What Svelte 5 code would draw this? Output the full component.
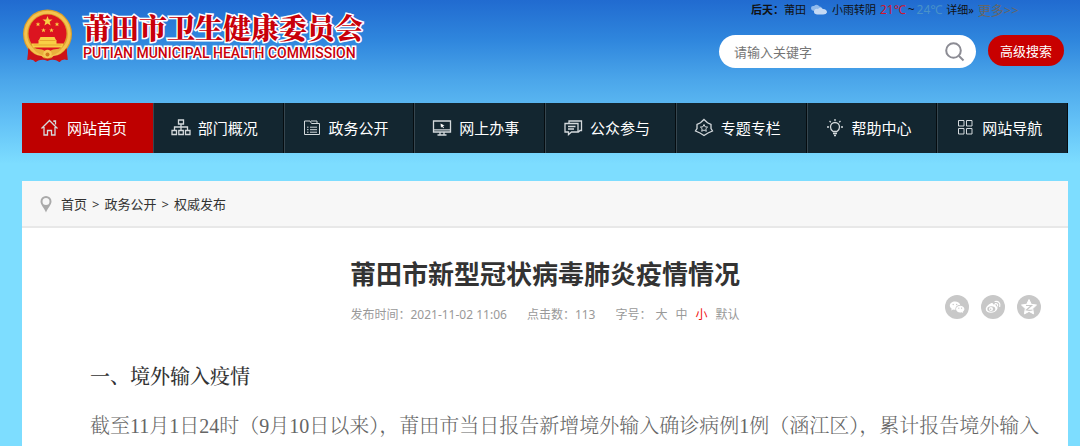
<script lang="ts">
  const nav = [
    { id: 'home', label: '网站首页' },
    { id: 'org', label: '部门概况' },
    { id: 'folder', label: '政务公开' },
    { id: 'screen', label: '网上办事' },
    { id: 'chat', label: '公众参与' },
    { id: 'badge', label: '专题专栏' },
    { id: 'bulb', label: '帮助中心' },
    { id: 'grid', label: '网站导航' }
  ];
  const sizes = ['大', '中', '小', '默认'];
  let active = $state('小');
  let keyword = $state('');
</script>

<div class="page">
  <header>
    <a class="brand" href="#home">
      <svg class="emblem" viewBox="0 0 50 54" aria-hidden="true">
        <path d="M6 36 L5 51 Q10 49 13 53 Q19 49 25 52 Q31 49 37 53 Q40 49 45 51 L44 36Z" fill="#c9141a" />
        <circle cx="25" cy="25" r="24.5" fill="#dda02a" />
        <circle cx="25" cy="25" r="21.8" fill="none" stroke="#f4c350" stroke-width="3" />
        <circle cx="25" cy="24.5" r="19" fill="#dc1420" />
        <path d="M25 7l1.3 3.4 3.7.1-2.9 2.3 1 3.6-3.1-2-3.1 2 1-3.6-2.9-2.3 3.7-.1z" fill="#f9cf45" />
        <g fill="#f9cf45">
          <path d="M15.500 13l.6 1.500 1.700.1-1.300 1 .5 1.600-1.500-.9-1.500.9.500-1.600-1.300-1 1.700-.1z" />
          <path d="M34.500 13l.6 1.500 1.700.1-1.300 1 .5 1.600-1.500-.9-1.500.9.500-1.600-1.300-1 1.700-.1z" />
          <path d="M21 19l.6 1.500 1.700.1-1.300 1 .5 1.600-1.500-.9-1.500.9.500-1.600-1.300-1 1.700-.1z" />
          <path d="M29 19l.6 1.500 1.700.1-1.300 1 .5 1.600-1.500-.9-1.500.9.500-1.600-1.300-1 1.700-.1z" />
          <path d="M18 28h14l1.500 3H34v3.500h7l-1.500 4h-29l-1.500-4h7V31h.5z" />
        </g>
        <path d="M17 31.500h16M11 36h28" stroke="#e29a28" stroke-width=".8" />
        <path d="M11 40 Q18 39 25 43 Q32 39 39 40 Q35 46 25 47 Q15 46 11 40Z" fill="#e8b03c" />
        <circle cx="25" cy="45" r="4.200" fill="#f6cb55" />
        <circle cx="25" cy="45.500" r="2" fill="#d2781d" />
        <path d="M6 39 Q10 46 19 47 L22 50 Q17 49 13 53 Q10 49 5 51Z M44 39 Q40 46 31 47 L28 50 Q33 49 37 53 Q40 49 45 51Z" fill="#cc1219" />
      </svg>
      <span class="names">
        <span class="zh">莆田市卫生健康委员会</span>
        <span class="en">PUTIAN MUNICIPAL HEALTH COMMISSION</span>
      </span>
    </a>

    <div class="tools">
      <div class="weather">
        <b>后天：</b><span>莆田</span>
        <svg class="cloud" viewBox="0 0 18 12" aria-hidden="true">
          <path d="M1 4Q1 1.500 4 2Q7-.5 9.500 2.500Q12 2.500 12 5Q10 8 5 7Q1 7 1 4Z" fill="#8fb9ec" />
          <path d="M4 7Q5 4 8 5Q10 2.500 13 5Q17 5 17 8.500Q16 11 12 10.500H7Q3.500 10 4 7Z" fill="#c4d9f4" />
        </svg>
        <span>小雨转阴</span>
        <span class="temps"><span class="low">21℃</span>~<span class="high">24℃</span></span>
        <a href="#detail">详细»</a>
        <a class="more" href="#more">更多&gt;&gt;</a>
      </div>
      <form class="search" onsubmit={(e) => e.preventDefault()}>
        <div class="field">
          <input type="text" aria-label="请输入关键字" placeholder="请输入关键字" bind:value={keyword} />
          <button class="go" type="submit" aria-label="搜索">
            <svg viewBox="0 0 20 20" aria-hidden="true"><circle cx="8.500" cy="8.500" r="7.300" /><path d="M14 14l4.500 4.500" /></svg>
          </button>
        </div>
        <button class="advanced" type="button">高级搜索</button>
      </form>
    </div>
  </header>

  <nav>
    {#each nav as item, i}
      <a href={'#' + item.id} class:current={i === 0}>
        <svg viewBox="0 0 20 20" aria-hidden="true">
          {#if item.id === 'home'}
            <path d="M1.500 10.500L9.500 2.500l8 8M14 4v-1h1.500v3.500M4 9v8h3.500v-4.500h4V17H15V9" />
          {:else if item.id === 'org'}
            <path d="M7.500 2h5v4h-5zM10 6v6M3.500 12V9h13v3M1 12.500h4.500v4H1zM7.800 12.500h4.500v4H7.800zM14.500 12.500H19v4h-4.500z" />
          {:else if item.id === 'folder'}
            <path class="thin" d="M2.500 16.500V3h5.500l1.500 2.500h8v11zM9 3h6v2.500M5 9.200h1.500M8 9.200h7M5 11.700h1.500M8 11.700h7M5 14.200h1.500M8 14.200h7" />
          {:else if item.id === 'screen'}
            <path d="M1.500 3h17v11h-17zM1.500 11.800h17M8 14v2.500M12 14v2.500M5.500 17h9" />
            <path class="solid" d="M8.500 5.500l4 2-1.700.6 1.200 1.600-.8.6-1.200-1.700-1 1.200z" />
          {:else if item.id === 'chat'}
            <path d="M6 5V3h12.500v9.500H17L15.500 14M2 5.500h13v8.500H8.500L5.500 16.500V14H2zM5 8.500h7.500M5 11h6" />
          {:else if item.id === 'badge'}
            <path d="M10 1.500l3.500 3.300 3.500 1.700v4l1.500 2.500-4.500 2-4 2.500L6 15l-4.500-2L3 10.500v-4l3.500-1.700z" />
            <path class="thin" d="M10 6.500l1.100 2.300 2.500.3-1.800 1.700.5 2.500L10 12l-2.300 1.300.5-2.500-1.800-1.700 2.500-.3z" />
          {:else if item.id === 'bulb'}
            <path d="M8 13.500Q5.500 12 5.500 9a4.500 4.500 0 0 1 9 0Q14.500 12 12 13.500zM8 15.500h4M9 17.500h2M10 1v2M4.500 3l1.300 1.300M15.500 3l-1.300 1.300M2 9h2M16 9h2" />
          {:else}
            <path class="thin" d="M3.500 2.500h5.500v5.500H3.500zM11.500 2.500H17v5.500h-5.500zM3.500 10.500h5.500V16H3.500zM11.500 10.500H17V16h-5.500z" />
          {/if}
        </svg>
        <span>{item.label}</span>
      </a>
    {/each}
  </nav>

  <main>
    <div class="crumbs">
      <svg viewBox="0 0 12 18" aria-hidden="true">
        <path fill-rule="evenodd" d="M6 1a5.500 5.500 0 0 1 5.500 5.500C11.500 10 7.500 13 6 17.500 4.500 13 .5 10 .5 6.500A5.500 5.500 0 0 1 6 1zm0 2a3.500 3.500 0 1 0 0 7 3.500 3.500 0 0 0 0-7z" fill="#aaa" />
      </svg>
      <a href="#home">首页</a><span>&gt;</span><a href="#open">政务公开</a><span>&gt;</span><a href="#release">权威发布</a>
    </div>

    <article>
      <h1>莆田市新型冠状病毒肺炎疫情情况</h1>
      <div class="info">
        <div class="meta">
          <span>发布时间：2021-11-02 11:06</span>
          <span>点击数：113</span>
          <span class="sizes">
            <span>字号：</span>
            {#each sizes as s}
              <button type="button" class:on={active === s} onclick={() => (active = s)}>{s}</button>
            {/each}
          </span>
        </div>
        <div class="share">
          <a href="#wechat" aria-label="微信">
            <svg viewBox="0 0 24 24" aria-hidden="true">
              <circle cx="12" cy="12" r="12" fill="#c8c8c8" />
              <path d="M10 6.500c-3 0-5.200 1.800-5.200 4.100 0 1.300.7 2.400 1.900 3.200l-.5 1.600 1.900-1c.6.200 1.200.3 1.900.3h.5c-.5-2.900 1.900-4.900 4.700-4.800C14.800 7.800 12.700 6.500 10 6.500z" fill="#fff" />
              <path d="M15.200 10.700c-2.400 0-4.200 1.500-4.200 3.400s1.800 3.400 4.200 3.400c.5 0 1-.1 1.500-.2l1.500.8-.4-1.300c1-.7 1.600-1.600 1.600-2.700 0-1.900-1.900-3.400-4.200-3.400z" fill="#fff" />
              <g fill="#c8c8c8"><circle cx="8.200" cy="9.500" r=".7" /><circle cx="11.700" cy="9.500" r=".7" /><circle cx="13.800" cy="13.200" r=".6" /><circle cx="16.600" cy="13.200" r=".6" /></g>
            </svg>
          </a>
          <a href="#weibo" aria-label="微博">
            <svg viewBox="0 0 24 24" aria-hidden="true">
              <circle cx="12" cy="12" r="12" fill="#c8c8c8" />
              <path d="M10 8.200c1.200-.5 2.300-.2 2 1.400 1.800-.7 3.300-.3 2.800 1.300 1.600.4 2.100 1.600 1.500 3-.9 2.300-3.500 3.900-6.500 3.900-2.900 0-5-1.500-5-3.600 0-2.500 2.800-5.100 5.200-6z" fill="#fff" />
              <ellipse cx="10.300" cy="14" rx="4" ry="2.800" fill="#c8c8c8" />
              <circle cx="10" cy="14" r="2" fill="#fff" /><circle cx="9.600" cy="14.300" r=".8" fill="#c8c8c8" />
              <path d="M14 6.500c3.500-.7 5.800 1.800 4.700 5M14.300 8.700c1.700-.3 2.700.8 2.200 2.300" fill="none" stroke="#fff" stroke-width="1.200" stroke-linecap="round" />
            </svg>
          </a>
          <a href="#qzone" aria-label="QQ空间">
            <svg viewBox="0 0 24 24" aria-hidden="true">
              <circle cx="12" cy="12" r="12" fill="#c8c8c8" />
              <path d="M12 4.500l2.300 4.800 5.200.7-3.800 3.600.9 5.300-4.600-2.500-4.600 2.500.9-5.300L4.500 10l5.200-.7z" fill="#fff" stroke="#fff" stroke-linejoin="round" />
              <path d="M9 10.500h5.500l-5 4.500q3 .6 6 0" fill="none" stroke="#c8c8c8" stroke-width="1.200" />
            </svg>
          </a>
        </div>
      </div>
      <div class="text">
        <h2>一、境外输入疫情</h2>
        <p>截至11月1日24时（9月10日以来），莆田市当日报告新增境外输入确诊病例1例（涵江区），累计报告境外输入</p>
      </div>
    </article>
  </main>
</div>

<style>
  :global(body) {
    margin: 0;
    background: #7dddff;
  }
  .page {
    box-sizing: border-box;
    display: flex;
    flex-direction: column;
    min-height: 100vh;
    padding: 0 12px 0 22px;
    background: linear-gradient(#216bd0 0, #2f86dd 40px, #4ba6ea 80px, #62c0f6 120px, #7dddff 164px);
    font: 13px/20px "Noto Sans", "Noto Sans CJK SC", sans-serif;
    color: #333;
  }
  a {
    color: inherit;
    text-decoration: none;
  }
  button {
    border: 0;
    padding: 0;
    background: none;
    font: inherit;
    color: inherit;
    cursor: pointer;
  }
  svg {
    display: block;
    flex: none;
  }
  header {
    display: flex;
    justify-content: space-between;
    height: 103px;
  }
  .brand {
    display: flex;
    align-items: flex-start;
    gap: 10px;
    padding-top: 9px;
  }
  .emblem {
    width: 51px;
    height: 54px;
  }
  .names {
    display: flex;
    flex-direction: column;
    color: #c8000a;
    white-space: nowrap;
    -webkit-text-stroke: 3px #fff;
    paint-order: stroke fill;
  }
  .zh {
    font: 900 28px/36px "Noto Serif CJK SC", "Noto Sans CJK SC", serif;
  }
  .en {
    font: 500 14px/16px Roboto, "Liberation Sans", sans-serif;
  }
  .tools {
    padding-right: 4px;
    color: #111;
  }
  .weather {
    display: flex;
    align-items: center;
    height: 20px;
    gap: 4px;
    padding-left: 32px;
    margin-bottom: 15px;
    font-size: 11px;
    white-space: nowrap;
  }
  .weather b {
    margin-right: -4px;
  }
  .cloud {
    width: 18px;
    height: 12px;
  }
  .temps {
    display: flex;
    gap: 2px;
    font-size: 12px;
  }
  .low {
    color: #d0142c;
  }
  .high {
    color: #4a92c8;
  }
  .more {
    color: #666;
    font-size: 13px;
  }
  .search {
    display: flex;
    gap: 12px;
  }
  .field {
    box-sizing: border-box;
    display: flex;
    align-items: center;
    width: 257px;
    height: 33px;
    padding: 0 11px 0 15px;
    border-radius: 17px;
    background: #fff;
  }
  .field input {
    flex: 1;
    min-width: 0;
    border: 0;
    padding: 0;
    outline: 0;
    background: none;
    font: inherit;
  }
  .field input::placeholder {
    color: #757575;
  }
  .go svg {
    width: 20px;
    height: 20px;
    fill: none;
    stroke: #8c8c94;
    stroke-width: 2;
  }
  .advanced {
    width: 76px;
    height: 31px;
    border-radius: 16px;
    background: #c80000;
    color: #fff;
  }
  nav {
    display: grid;
    grid-template-columns: repeat(8, 1fr);
    margin-bottom: 28px;
    background: #132630;
  }
  nav a {
    box-sizing: border-box;
    display: flex;
    align-items: center;
    gap: 7px;
    height: 50px;
    padding-left: 17px;
    border-left: 1px solid #36464f;
    border-right: 1px solid #050c10;
    color: #fff;
    font-size: 15px;
    white-space: nowrap;
  }
  nav a.current {
    border-color: #be0000;
    background: #be0000;
  }
  nav svg {
    width: 20px;
    height: 20px;
    fill: none;
    stroke: #d4d9dc;
    stroke-width: 1.300;
  }
  nav .thin {
    stroke-width: 1;
  }
  nav .solid {
    fill: #fff;
    stroke: none;
  }
  main {
    flex: 1;
    background: #fff;
  }
  .crumbs {
    display: flex;
    align-items: center;
    gap: 5px;
    height: 45px;
    padding-left: 18px;
    border-bottom: 2px solid #e8e8e8;
    background: #f7f7f7;
  }
  .crumbs svg {
    width: 12px;
    height: 18px;
    margin-right: 4px;
  }
  h1 {
    margin: 0;
    padding-top: 27px;
    font-size: 26px;
    line-height: 38px;
    text-align: center;
  }
  .info {
    display: grid;
    grid-template-columns: 1fr auto 1fr;
    padding: 2px 27px 0;
  }
  .meta {
    grid-column: 2;
    display: flex;
    gap: 20px;
    padding-top: 10px;
    color: #999;
    font-size: 12px;
    white-space: nowrap;
  }
  .sizes {
    display: flex;
    gap: 8px;
  }
  .sizes span {
    margin-right: -4px;
  }
  .sizes .on {
    color: #f01010;
  }
  .share {
    display: flex;
    justify-content: flex-end;
    gap: 12px;
  }
  .share svg {
    width: 24px;
    height: 24px;
  }
  .text {
    padding: 38px 20px 0 68px;
    color: #666;
    font: 300 20px/28px "Liberation Serif", "Noto Serif CJK SC", "Noto Sans CJK SC", serif;
  }
  h2 {
    margin: 0 0 21px;
    color: #333;
    font-size: 20px;
    font-weight: 500;
  }
  p {
    margin: 0;
    white-space: nowrap;
  }
</style>
